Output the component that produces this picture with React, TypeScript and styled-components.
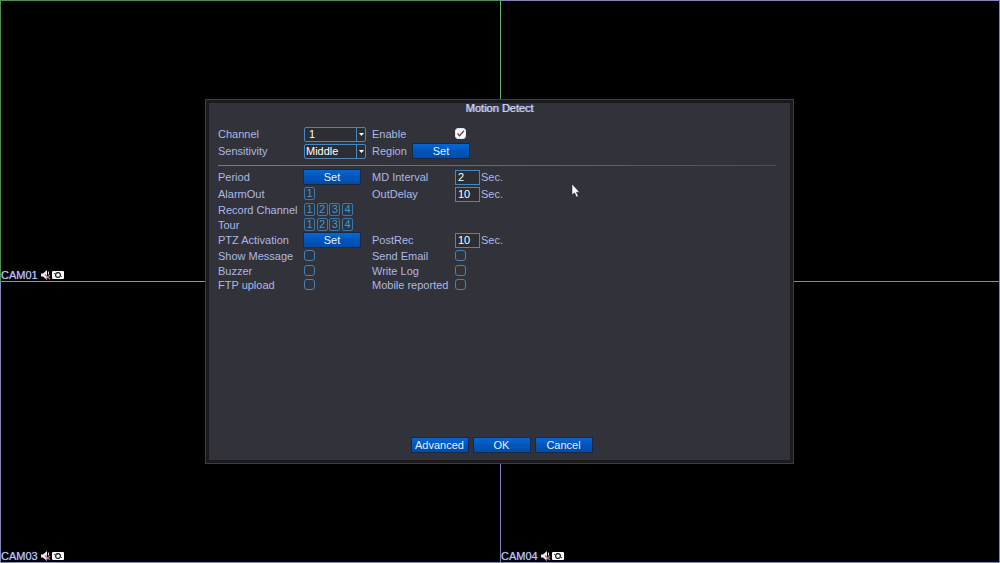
import React from "react";
import styled, { createGlobalStyle, css } from "styled-components";

const GlobalStyle = createGlobalStyle`
  * { box-sizing: border-box; }
  html, body, #root { height: 100%; }
  body {
    margin: 0;
    background: #000;
    color: #adb8e4;
    font: 11px/14px "Liberation Sans", Arial, sans-serif;
  }
  button, input, select { font: inherit; margin: 0; }
`;

const Screen = styled.div`
  position: relative;
  height: 100%;
  overflow: hidden;
`;

const CameraGrid = styled.main`
  display: grid;
  grid-template-columns: 1fr 1fr;
  grid-template-rows: 1fr 1fr;
  height: 100%;
`;

const CameraCell = styled.section<{ $active?: boolean; $right?: boolean; $lower?: boolean }>`
  display: flex;
  align-items: flex-end;
  border: 0 solid ${(p) => (p.$active ? "#4b8f55" : "#8585bc")};
  border-top-width: ${(p) => (p.$lower ? "0" : "1px")};
  border-left-width: 1px;
  border-bottom-width: 1px;
  ${(p) => p.$active && css`border-bottom-color: #5fb866;`}
  ${(p) => p.$right && css`border-right-width: 1px;`}
  ${(p) => p.$right && !p.$lower && css`border-left-color: #67b06c;`}
`;

const CameraTag = styled.div`
  display: flex;
  align-items: center;
  gap: 2px;
  height: 12px;
  color: #b9c2f4;
  text-shadow: 0 0 1px #7f88c8;
`;

const CameraIcons = styled.svg`
  display: block;
  width: 25px;
  height: 10px;
`;

const Dialog = styled.form`
  position: absolute;
  top: 17.6%;
  bottom: 17.6%;
  left: 20.5%;
  right: 20.6%;
  display: flex;
  flex-direction: column;
  border: 1px solid #3e3e40;
  background: #32323a;
  box-shadow: inset 0 0 0 3px #1a1a1f;
  padding: 2px 17px 10px 12px;
`;

const Title = styled.h1`
  margin: 0 0 11px;
  padding-left: 5px;
  font-size: 11px;
  line-height: 13px;
  font-weight: 400;
  text-align: center;
  color: #d3d8f8;
  text-shadow: 1px 0 0 #8f95bb;
`;

const Fields = styled.div<{ $rows: string }>`
  display: grid;
  grid-template-columns: 86px 68px 83px 1fr;
  grid-template-rows: ${(p) => p.$rows};
  align-items: center;
`;

const Label = styled.label<{ $col?: number }>`
  margin-bottom: 1px;
  white-space: nowrap;
  ${(p) => p.$col && css`grid-column: ${p.$col};`}
`;

const Divider = styled.hr`
  width: 100%;
  height: 1px;
  margin: 5px 0 3px;
  border: 0;
  background: linear-gradient(90deg, #3f8cc4, #3b76a3 50%, #3c5466);
`;

const SelectBox = styled.div`
  position: relative;
  width: 62px;
  height: 15px;
`;

const Select = styled.select<{ $indent?: boolean }>`
  display: block;
  appearance: none;
  width: 100%;
  height: 15px;
  padding: 0 10px 0 ${(p) => (p.$indent ? "4px" : "1px")};
  border: 1px solid #4688c0;
  border-radius: 2px;
  background: linear-gradient(#4688c0, #4688c0) 51px 0 / 1px 100% no-repeat #2d2d34;
  color: #fff;
  line-height: 13px;
`;

const Arrow = styled.svg`
  position: absolute;
  top: 6px;
  right: 2px;
  width: 5px;
  height: 3px;
  pointer-events: none;
`;

const Button = styled.button`
  width: 56px;
  height: 14px;
  margin-bottom: 1px;
  padding: 0;
  border: 0;
  background: linear-gradient(#0a66d0, #0055bd 50%, #004ca8);
  box-shadow: 0 0 0 1px #182946;
  color: #e4f1ff;
  line-height: 14px;
  white-space: nowrap;
`;

const RegionField = styled.div`
  display: grid;
  grid-template-columns: 41px 56px;
  grid-column: 3 / span 2;
  align-items: center;
`;

const Channels = styled.div`
  display: flex;
  justify-content: space-between;
  width: 49px;
`;

const ChannelToggle = styled.button`
  width: 11px;
  height: 13px;
  margin-bottom: 2px;
  padding: 0;
  border: 1px solid #3d78a6;
  border-radius: 2px;
  background: #283646;
  color: #5590be;
  line-height: 11px;
  text-align: center;
`;

const Seconds = styled.div`
  display: flex;
  align-items: center;
  gap: 1px;
`;

const Unit = styled.span`
  margin-bottom: 1px;
`;

const NumberInput = styled.input`
  width: 25px;
  height: 15px;
  padding: 0 0 1px 2px;
  border: 1px solid #4688c0;
  border-radius: 0;
  background: #2d2d34;
  color: #fff;
`;

const Checkbox = styled.input.attrs({ type: "checkbox" })`
  appearance: none;
  width: 11px;
  height: 11px;
  margin-bottom: 2px;
  border: 1px solid #4384b6;
  border-radius: 3px;
  background: transparent;

  &:checked {
    border-color: #dfe7ff;
    background: #fff;
  }
`;

const CheckBox = styled.div`
  position: relative;
  display: flex;
`;

const CheckMark = styled.svg`
  position: absolute;
  top: 2px;
  left: 2px;
  width: 8px;
  height: 7px;
  pointer-events: none;
`;

const Actions = styled.div`
  display: flex;
  justify-content: center;
  gap: 6px;
  margin-top: auto;
  padding-left: 9px;
`;

const Pointer = styled.svg`
  position: absolute;
  top: 32.7%;
  left: 57%;
  width: 10px;
  height: 14px;
  pointer-events: none;
`;

function Camera({ name, ...place }: { name?: string; $active?: boolean; $right?: boolean; $lower?: boolean }) {
  return (
    <CameraCell {...place}>
      {name && (
        <CameraTag>
          {name}
          <CameraIcons viewBox="0 0 25 10" aria-hidden="true">
            <path d="M1 3.5h2L7 0v10L3 6.5H1z" fill="#eeeaf5" />
            <path d="M5 4.5l5 4.5M10 5L6 9" stroke="#b8707e" strokeWidth="1.3" fill="none" />
            <path d="M8.5 1.5v3" stroke="#ddd" />
            <rect x="12" y="1" width="12" height="8" rx="1" fill="#fff" />
            <circle cx="18" cy="5" r="2.4" fill="none" stroke="#111" strokeWidth="1.1" />
            <path d="M14 3.5h1.5M20.5 6.5H22" stroke="#555" strokeWidth="1" />
          </CameraIcons>
        </CameraTag>
      )}
    </CameraCell>
  );
}

function Dropdown({ id, options, indent }: { id: string; options: string[]; indent?: boolean }) {
  return (
    <SelectBox>
      <Select id={id} $indent={indent}>
        {options.map((o) => (
          <option key={o}>{o}</option>
        ))}
      </Select>
      <Arrow viewBox="0 0 5 3" aria-hidden="true">
        <path d="M0 0h5L2.5 3z" fill="#fff" />
      </Arrow>
    </SelectBox>
  );
}

function ChannelPicker({ label, count }: { label: string; count: number }) {
  return (
    <Channels role="group" aria-label={label}>
      {Array.from({ length: count }, (_, i) => (
        <ChannelToggle key={i} type="button" aria-pressed="false">
          {i + 1}
        </ChannelToggle>
      ))}
    </Channels>
  );
}

function SecondsField({ id, value }: { id: string; value: string }) {
  return (
    <Seconds>
      <NumberInput id={id} defaultValue={value} />
      <Unit>Sec.</Unit>
    </Seconds>
  );
}

export default function App() {
  return (
    <Screen>
      <GlobalStyle />
      <CameraGrid>
        <Camera name="CAM01" $active />
        <Camera $right />
        <Camera name="CAM03" $lower />
        <Camera name="CAM04" $lower $right />
      </CameraGrid>

      <Dialog role="dialog" aria-labelledby="title" onSubmit={(e) => e.preventDefault()}>
        <Title id="title">Motion Detect</Title>
        <Fields $rows="17px 17px">
          <Label htmlFor="channel">Channel</Label>
          <Dropdown id="channel" options={["1", "2", "3", "4"]} indent />
          <Label htmlFor="enable">Enable</Label>
          <CheckBox>
            <Checkbox id="enable" defaultChecked />
            <CheckMark viewBox="0 0 8 7" aria-hidden="true">
              <path d="M.5 3.5l2 2.2L7 .7" fill="none" stroke="#8a3038" strokeWidth="1.3" />
            </CheckMark>
          </CheckBox>
          <Label htmlFor="sensitivity">Sensitivity</Label>
          <Dropdown id="sensitivity" options={["Middle", "Low", "High"]} />
          <RegionField>
            <Label htmlFor="region">Region</Label>
            <Button id="region" type="button">Set</Button>
          </RegionField>
        </Fields>
        <Divider />
        <Fields $rows="17px 17px 15px 15px 15px 16px 14px 14px">
          <Label htmlFor="period">Period</Label>
          <Button id="period" type="button">Set</Button>
          <Label htmlFor="interval">MD Interval</Label>
          <SecondsField id="interval" value="2" />

          <Label as="span">AlarmOut</Label>
          <ChannelPicker label="AlarmOut" count={1} />
          <Label htmlFor="delay">OutDelay</Label>
          <SecondsField id="delay" value="10" />

          <Label as="span">Record Channel</Label>
          <ChannelPicker label="Record Channel" count={4} />

          <Label as="span" $col={1}>Tour</Label>
          <ChannelPicker label="Tour" count={4} />

          <Label htmlFor="ptz" $col={1}>PTZ Activation</Label>
          <Button id="ptz" type="button">Set</Button>
          <Label htmlFor="postrec">PostRec</Label>
          <SecondsField id="postrec" value="10" />

          <Label htmlFor="message">Show Message</Label>
          <Checkbox id="message" />
          <Label htmlFor="email">Send Email</Label>
          <Checkbox id="email" />

          <Label htmlFor="buzzer">Buzzer</Label>
          <Checkbox id="buzzer" />
          <Label htmlFor="log">Write Log</Label>
          <Checkbox id="log" />

          <Label htmlFor="ftp">FTP upload</Label>
          <Checkbox id="ftp" />
          <Label htmlFor="mobile">Mobile reported</Label>
          <Checkbox id="mobile" />
        </Fields>
        <Actions>
          <Button type="button">Advanced</Button>
          <Button type="submit">OK</Button>
          <Button type="button">Cancel</Button>
        </Actions>
      </Dialog>

      <Pointer viewBox="0 0 10 14" aria-hidden="true">
        <path d="M2 0v11l2.5-2.2L6.5 13l1.8-.8-2-4H9.5z" fill="#fff" stroke="#222" strokeWidth=".5" />
      </Pointer>
    </Screen>
  );
}
